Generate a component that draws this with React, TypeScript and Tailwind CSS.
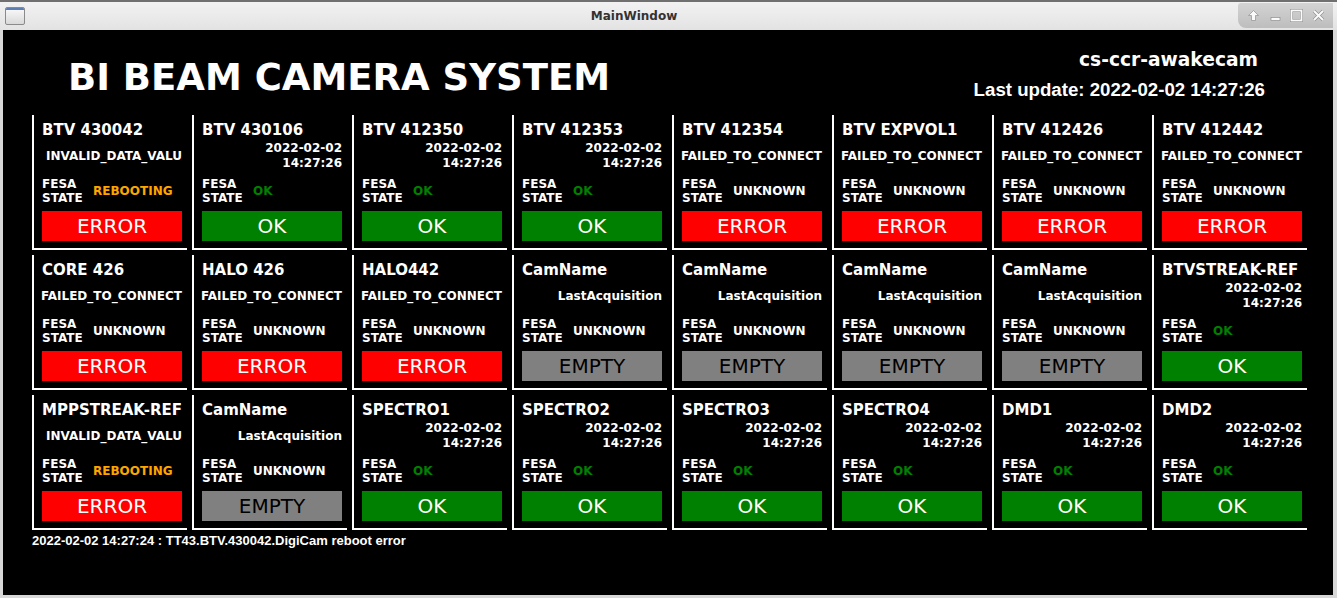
type Cam = {
  name: string;
  info: string;
  state: 'REBOOTING' | 'OK' | 'UNKNOWN';
  status: 'ERROR' | 'OK' | 'EMPTY';
};

const DATE = '2022-02-02\n14:27:26';
const FAIL = 'FAILED_TO_CONNECT';
const INVALID = 'INVALID_DATA_VALU';
const LAST = 'LastAcquisition';

const cams: Cam[] = [
  { name: 'BTV 430042', info: INVALID, state: 'REBOOTING', status: 'ERROR' },
  { name: 'BTV 430106', info: DATE, state: 'OK', status: 'OK' },
  { name: 'BTV 412350', info: DATE, state: 'OK', status: 'OK' },
  { name: 'BTV 412353', info: DATE, state: 'OK', status: 'OK' },
  { name: 'BTV 412354', info: FAIL, state: 'UNKNOWN', status: 'ERROR' },
  { name: 'BTV EXPVOL1', info: FAIL, state: 'UNKNOWN', status: 'ERROR' },
  { name: 'BTV 412426', info: FAIL, state: 'UNKNOWN', status: 'ERROR' },
  { name: 'BTV 412442', info: FAIL, state: 'UNKNOWN', status: 'ERROR' },
  { name: 'CORE 426', info: FAIL, state: 'UNKNOWN', status: 'ERROR' },
  { name: 'HALO 426', info: FAIL, state: 'UNKNOWN', status: 'ERROR' },
  { name: 'HALO442', info: FAIL, state: 'UNKNOWN', status: 'ERROR' },
  { name: 'CamName', info: LAST, state: 'UNKNOWN', status: 'EMPTY' },
  { name: 'CamName', info: LAST, state: 'UNKNOWN', status: 'EMPTY' },
  { name: 'CamName', info: LAST, state: 'UNKNOWN', status: 'EMPTY' },
  { name: 'CamName', info: LAST, state: 'UNKNOWN', status: 'EMPTY' },
  { name: 'BTVSTREAK-REF', info: DATE, state: 'OK', status: 'OK' },
  { name: 'MPPSTREAK-REF', info: INVALID, state: 'REBOOTING', status: 'ERROR' },
  { name: 'CamName', info: LAST, state: 'UNKNOWN', status: 'EMPTY' },
  { name: 'SPECTRO1', info: DATE, state: 'OK', status: 'OK' },
  { name: 'SPECTRO2', info: DATE, state: 'OK', status: 'OK' },
  { name: 'SPECTRO3', info: DATE, state: 'OK', status: 'OK' },
  { name: 'SPECTRO4', info: DATE, state: 'OK', status: 'OK' },
  { name: 'DMD1', info: DATE, state: 'OK', status: 'OK' },
  { name: 'DMD2', info: DATE, state: 'OK', status: 'OK' },
];

const stateColor = {
  REBOOTING: 'text-[#ffa500]',
  OK: 'text-[#008000]',
  UNKNOWN: 'text-white',
};

const statusStyle = {
  ERROR: 'bg-[#ff0000] text-white',
  OK: 'bg-[#008000] text-white',
  EMPTY: 'bg-[#808080] text-black',
};

function CamCell({ cam }: { cam: Cam }) {
  return (
    <div className="w-[155px] h-[135px] border-l-2 border-b-2 border-white pl-[8px] pr-[5px] pt-[6px] flex flex-col">
      <div className="h-[18px] leading-[18px] text-[15px] font-bold text-white whitespace-nowrap">{cam.name}</div>
      <div className="mt-[2px] h-[30px] flex items-center justify-end">
        <div className="text-[12px] leading-[15px] font-bold text-white text-right whitespace-pre">{cam.info}</div>
      </div>
      <div className="mt-[6px] h-[28px] flex items-center">
        <div className="w-[51px] text-[12px] leading-[14px] font-bold text-white">
          FESA
          <br />
          STATE
        </div>
        <div className={`text-[12px] font-bold ${stateColor[cam.state]}`}>{cam.state}</div>
      </div>
      <div className={`mt-[6px] h-[30px] w-[140px] flex items-center justify-center text-[20px] ${statusStyle[cam.status]}`}>
        {cam.status}
      </div>
    </div>
  );
}

function WindowButtons() {
  return (
    <div className="h-[25px] w-[95px] mt-[1px] self-start rounded-bl-[8px] rounded-tl-[3px] bg-gradient-to-b from-[#d4d4d4] to-[#bdbdbd] flex items-center justify-between pl-[9px] pr-[8px]">
      <svg width="13" height="13" viewBox="0 0 13 13">
        <path d="M6.5 1.5 L11.5 6.5 H8.5 V11.5 H4.5 V6.5 H1.5 Z" fill="#fafafa" stroke="#8f8f8f" strokeWidth="0.7" />
      </svg>
      <svg width="13" height="13" viewBox="0 0 13 13">
        <rect x="2" y="8.5" width="9" height="3" fill="#fafafa" stroke="#8f8f8f" strokeWidth="0.7" />
      </svg>
      <svg width="13" height="13" viewBox="0 0 13 13">
        <rect x="1.5" y="1.5" width="10" height="10" fill="none" stroke="#8f8f8f" strokeWidth="3" />
        <rect x="1.5" y="1.5" width="10" height="10" fill="none" stroke="#fafafa" strokeWidth="1.8" />
      </svg>
      <svg width="13" height="13" viewBox="0 0 13 13">
        <path d="M2 2 L11 11 M11 2 L2 11" stroke="#8f8f8f" strokeWidth="3.2" />
        <path d="M2 2 L11 11 M11 2 L2 11" stroke="#fafafa" strokeWidth="2" />
      </svg>
    </div>
  );
}

export default function App() {
  return (
    <div className="w-[1337px] h-[598px] flex flex-col bg-[#d8d8d8] font-['DejaVu_Sans',sans-serif] overflow-hidden">
      {/* title bar */}
      <div className="h-[30px] flex border-t-2 border-[#707070] bg-gradient-to-b from-[#f2f2f2] to-[#e3e3e3]">
        <div className="w-[30px] flex items-center pl-[5px]">
          <div className="w-[20px] h-[18px] border border-[#8a8a8a] rounded-[2px] bg-gradient-to-b from-[#fbfbfb] to-[#d9d9d9] overflow-hidden">
            <div className="h-[2px] bg-[#5b7fb5]" />
          </div>
        </div>
        <div className="flex-1 flex items-center justify-center text-[12px] font-bold text-[#333]">MainWindow</div>
        <WindowButtons />
        <div className="w-[4px]" />
      </div>

      {/* main area */}
      <div className="flex-1 ml-[3px] mr-[4px] mb-[3px] bg-black flex flex-col">
        <div className="h-[85px] flex justify-between">
          <div className="mt-[26px] ml-[65px] text-[37px] leading-[43px] font-bold text-white">BI BEAM CAMERA SYSTEM</div>
          <div className="mt-[19px] mr-[68px] flex flex-col items-end">
            <div className="mr-[7px] text-[18.67px] leading-[22px] font-bold text-white">cs-ccr-awakecam</div>
            <div className="mt-[8px] font-['Liberation_Sans',sans-serif] text-[18.67px] leading-[21px] font-bold text-white">
              Last update: 2022-02-02 14:27:26
            </div>
          </div>
        </div>

        <div className="pl-[29px] grid grid-cols-[repeat(8,155px)] auto-rows-[135px] gap-[5px]">
          {cams.map((c, i) => (
            <CamCell key={i} cam={c} />
          ))}
        </div>

        <div className="pl-[29px] mt-[3px] font-['Liberation_Sans',sans-serif] text-[13px] leading-[16px] font-bold text-white">
          2022-02-02 14:27:24 : TT43.BTV.430042.DigiCam reboot error
        </div>
      </div>
    </div>
  );
}
